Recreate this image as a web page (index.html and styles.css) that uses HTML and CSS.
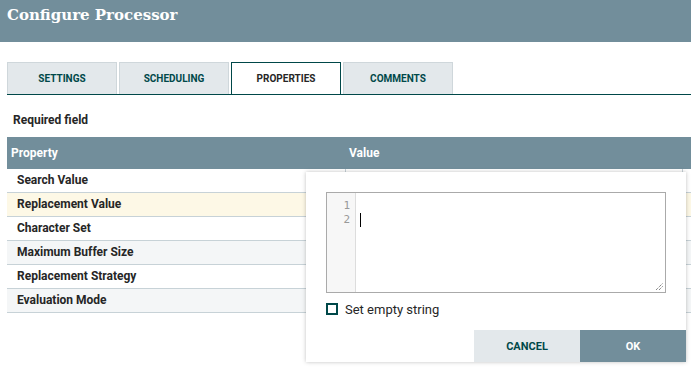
FILE: index.html
```html
<!DOCTYPE html>
<html lang="en">
<head>
    <meta charset="UTF-8">
    <meta name="viewport" content="width=device-width, initial-scale=1.0">
    <title>Configure Processor</title>
    <link rel="stylesheet" href="styles.css">
</head>
<body>
    <div class="dialog-header">
        <h1>Configure Processor</h1>
    </div>

    <div class="dialog-body">
        <div class="tabs">
            <div class="tab">Settings</div>
            <div class="tab">Scheduling</div>
            <div class="tab selected">Properties</div>
            <div class="tab">Comments</div>
        </div>

        <div class="required">Required field</div>

        <div class="grid">
            <div class="grid-header">
                <div class="cell col-prop">Property</div>
                <div class="cell col-val">Value</div>
            </div>
            <div class="grid-row">
                <div class="cell col-prop">Search Value</div>
                <div class="cell col-val"></div>
            </div>
            <div class="grid-row odd active">
                <div class="cell col-prop">Replacement Value</div>
                <div class="cell col-val"></div>
            </div>
            <div class="grid-row">
                <div class="cell col-prop">Character Set</div>
                <div class="cell col-val"></div>
            </div>
            <div class="grid-row odd">
                <div class="cell col-prop">Maximum Buffer Size</div>
                <div class="cell col-val"></div>
            </div>
            <div class="grid-row">
                <div class="cell col-prop">Replacement Strategy</div>
                <div class="cell col-val"></div>
            </div>
            <div class="grid-row odd">
                <div class="cell col-prop">Evaluation Mode</div>
                <div class="cell col-val"></div>
            </div>

            <!-- value editor popup -->
            <div class="editor-popup">
                <div class="code-editor">
                    <div class="gutter">
                        <div>1</div>
                        <div>2</div>
                    </div>
                    <div class="code-lines">
                        <div class="code-line"></div>
                        <div class="code-line"><span class="cursor"></span></div>
                    </div>
                    <svg class="resize-grip" width="9" height="9" viewBox="0 0 9 9">
                        <path d="M1 8 L8 1 M4 8 L8 4" stroke="#555" stroke-width="1" stroke-dasharray="1 1" fill="none"/>
                    </svg>
                </div>
                <label class="empty-string">
                    <span class="checkbox"></span>
                    Set empty string
                </label>
                <div class="popup-buttons">
                    <button class="btn btn-cancel">Cancel</button>
                    <button class="btn btn-ok">OK</button>
                </div>
            </div>
        </div>
    </div>
</body>
</html>
```

FILE: styles.css
```css
body {
    font-family: Roboto, "Liberation Sans", sans-serif;
    background: #fff;
    color: #262626;
    margin: 0;
    min-height: 367px;
}
.dialog-header {
    background: #728e9b;
    height: 42px;
    padding: 0 7px;
}
.dialog-header h1 {
    margin: 0;
    font-family: "DejaVu Serif", "Liberation Serif", serif;
    font-weight: 700;
    font-size: 15px;
    line-height: 30px;
    color: #fff;
}
.dialog-body {
    padding: 20px 0 0 7px;
}
.tabs {
    display: flex;
    gap: 2px;
    height: 32px;
    border-bottom: 1px solid #004849;
}
.tab {
    width: 108px;
    background: #e3e8eb;
    border: 1px solid #cfd7db;
    border-bottom: none;
    color: #004849;
    font-size: 10px;
    font-weight: 700;
    text-transform: uppercase;
    display: flex;
    align-items: center;
    justify-content: center;
}
.tab.selected {
    background: #fff;
    border-color: #004849;
    color: #262626;
}
.required {
    font-size: 12px;
    font-weight: 700;
    padding: 18px 0 0 6px;
    height: 24px;
    line-height: 14px;
}
.grid {
    position: relative;
    height: 230px;
}
.grid-header {
    display: flex;
    background: #728e9b;
    height: 32px;
    color: #fff;
    font-weight: 700;
    font-size: 12px;
}
.grid-header .cell {
    line-height: 32px;
}
.grid-row {
    display: flex;
    height: 23px;
    border-bottom: 1px solid #c7d2d7;
    font-size: 12px;
    font-weight: 700;
}
.grid-row .cell {
    line-height: 23px;
}
.grid-row.odd {
    background: #f4f6f7;
}
.grid-row.active {
    background: #fdf8e6;
}
.cell {
    box-sizing: border-box;
}
.col-prop {
    width: 338px;
    padding-left: 4px;
}
.grid-row .col-prop {
    padding-left: 10px;
}
.col-val {
    width: 338px;
    padding-left: 4px;
}
.grid-row .col-val {
    border-left: 1px solid #c7d2d7;
    border-right: 1px solid #c7d2d7;
}
.editor-popup {
    position: absolute;
    left: 299px;
    top: 35px;
    width: 380px;
    height: 190px;
    background: #fff;
    box-shadow: 0 0 4px rgba(0, 0, 0, 0.25);
    box-sizing: border-box;
    padding: 20px 0 0 20px;
}
.code-editor {
    position: relative;
    display: flex;
    width: 340px;
    height: 101px;
    box-sizing: border-box;
    border: 1px solid #aaa;
}
.gutter {
    width: 29px;
    background: #f7f7f7;
    border-right: 1px solid #ddd;
    font-family: "DejaVu Sans Mono", monospace;
    font-size: 11px;
    line-height: 14px;
    color: #999;
    text-align: right;
    padding: 6px 5px 0 0;
    box-sizing: border-box;
}
.code-lines {
    padding: 6px 0 0 4px;
}
.code-line {
    height: 14px;
}
.cursor {
    display: inline-block;
    width: 1px;
    height: 14px;
    background: #000;
    vertical-align: top;
}
.resize-grip {
    position: absolute;
    right: 1px;
    bottom: 1px;
}
.empty-string {
    display: flex;
    align-items: center;
    gap: 7px;
    margin-top: 9px;
    font-size: 13px;
    height: 14px;
}
.checkbox {
    width: 12px;
    height: 12px;
    box-sizing: border-box;
    border: 2px solid #004849;
}
.popup-buttons {
    position: absolute;
    right: 0;
    bottom: 0;
    display: flex;
}
.btn {
    width: 106px;
    height: 32px;
    border: none;
    font-family: Roboto, "Liberation Sans", sans-serif;
    font-size: 11px;
    font-weight: 700;
    text-transform: uppercase;
    cursor: pointer;
}
.btn-cancel {
    background: #e3e8eb;
    color: #004849;
}
.btn-ok {
    background: #728e9b;
    color: #fff;
}
```
